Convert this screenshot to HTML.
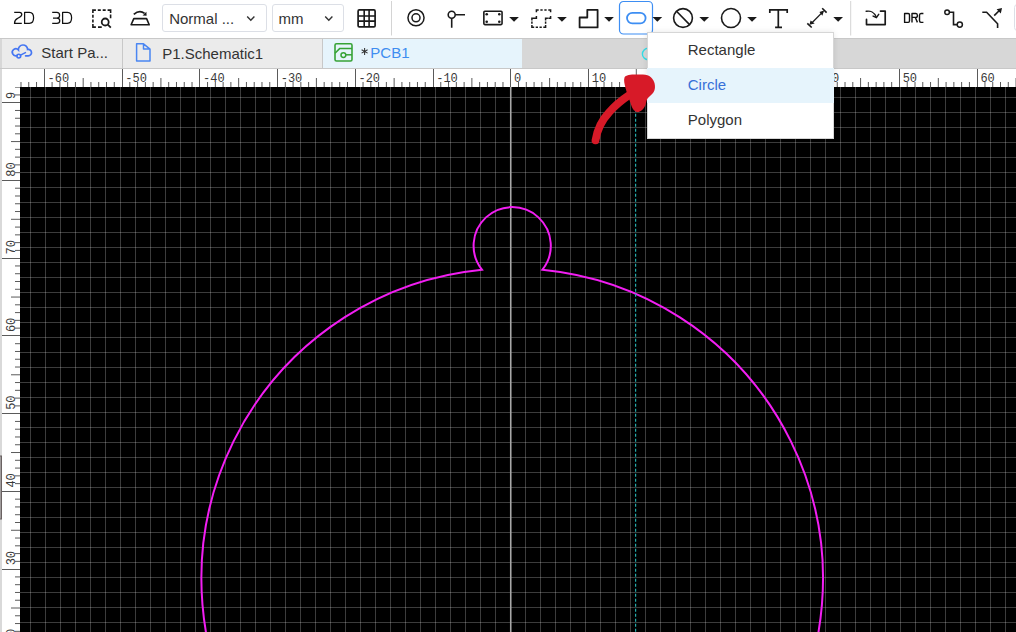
<!DOCTYPE html>
<html><head><meta charset="utf-8"><style>
html,body{margin:0;padding:0;}
body{width:1016px;height:632px;position:relative;overflow:hidden;background:#fff;font-family:"Liberation Sans",sans-serif;color:#222;}
.a{position:absolute;}
.sel{position:absolute;top:4px;height:27.5px;border:1px solid #dcdfe6;border-radius:3px;background:#fff;box-sizing:border-box;}
.sel span{position:absolute;left:6.2px;top:4.6px;font-size:15px;color:#333;}
.tabbar{position:absolute;left:0;top:38px;width:1016px;height:31px;background:#d7d7d7;border-top:1px solid #c8c8c8;border-bottom:1px solid #c8c8c8;box-sizing:border-box;}
.tab{position:absolute;top:39px;height:29px;background:#ebebeb;}
.tab span{position:absolute;top:6.7px;font-size:15px;color:#333;white-space:nowrap;}
.menu{position:absolute;left:647.2px;top:32.2px;width:186.6px;height:106.8px;background:#fff;border:1px solid #d6d6d6;box-sizing:border-box;box-shadow:0 0 6px rgba(0,0,0,0.10);}
.mi{position:absolute;left:-1px;width:186.6px;height:35px;font-size:15px;color:#333;}
.mi span{position:absolute;left:40.6px;top:9.8px;}
</style></head><body>
<svg width="1016" height="632" viewBox="0 0 1016 632" style="position:absolute;left:0;top:0">
<defs><clipPath id="cv"><rect x="20" y="87" width="996" height="545"/></clipPath><clipPath id="rh"><rect x="20" y="69" width="996" height="18"/></clipPath><clipPath id="rv"><rect x="2" y="87" width="18" height="545"/></clipPath></defs>
<rect x="2" y="69" width="1014" height="563" fill="#fff"/>
<rect x="0" y="38" width="2" height="594" fill="#d9d9d9"/>
<rect x="20" y="87" width="996" height="545" fill="#000"/>
<path d="M30.50 87V632 M45.50 87V632 M60.50 87V632 M75.50 87V632 M90.50 87V632 M105.50 87V632 M120.50 87V632 M135.50 87V632 M150.50 87V632 M165.50 87V632 M180.50 87V632 M195.50 87V632 M210.50 87V632 M225.50 87V632 M240.50 87V632 M255.50 87V632 M270.50 87V632 M285.50 87V632 M300.50 87V632 M315.50 87V632 M330.50 87V632 M345.50 87V632 M360.50 87V632 M375.50 87V632 M390.50 87V632 M405.50 87V632 M420.50 87V632 M435.50 87V632 M450.50 87V632 M465.50 87V632 M480.50 87V632 M495.50 87V632 M510.50 87V632 M525.50 87V632 M540.50 87V632 M555.50 87V632 M570.50 87V632 M585.50 87V632 M600.50 87V632 M615.50 87V632 M630.50 87V632 M645.50 87V632 M660.50 87V632 M675.50 87V632 M690.50 87V632 M705.50 87V632 M720.50 87V632 M735.50 87V632 M750.50 87V632 M765.50 87V632 M780.50 87V632 M795.50 87V632 M810.50 87V632 M825.50 87V632 M840.50 87V632 M855.50 87V632 M870.50 87V632 M885.50 87V632 M900.50 87V632 M915.50 87V632 M930.50 87V632 M945.50 87V632 M960.50 87V632 M975.50 87V632 M990.50 87V632 M1005.50 87V632 M20 97.50H1016 M20 112.50H1016 M20 127.50H1016 M20 142.50H1016 M20 157.50H1016 M20 172.50H1016 M20 187.50H1016 M20 202.50H1016 M20 217.50H1016 M20 232.50H1016 M20 247.50H1016 M20 262.50H1016 M20 277.50H1016 M20 292.50H1016 M20 307.50H1016 M20 322.50H1016 M20 337.50H1016 M20 352.50H1016 M20 367.50H1016 M20 382.50H1016 M20 397.50H1016 M20 412.50H1016 M20 427.50H1016 M20 442.50H1016 M20 457.50H1016 M20 472.50H1016 M20 487.50H1016 M20 502.50H1016 M20 517.50H1016 M20 532.50H1016 M20 547.50H1016 M20 562.50H1016 M20 577.50H1016 M20 592.50H1016 M20 607.50H1016 M20 622.50H1016" stroke="#fff" stroke-opacity="0.235" stroke-width="1" fill="none"/>
<path d="M510.75 87V632" stroke="#a8a8a8" stroke-width="1.6"/>
<g clip-path="url(#cv)"><path d="M481.95 269.68 A38.6 38.6 0 1 1 542.45 269.68 A310.8 310.8 0 1 1 481.95 269.68 Z" stroke="#f21ef2" stroke-width="2" fill="none"/></g>
<path d="M635.6 87V632" stroke="#26aaaa" stroke-width="1.2" stroke-dasharray="3 2" stroke-dashoffset="-1.8"/>
<g clip-path="url(#rh)"><path d="M5.44 78V87 M13.21 82V87 M20.99 82V87 M28.76 82V87 M36.54 82V87 M44.50 69V87 M52.08 82V87 M59.86 82V87 M67.63 82V87 M75.41 82V87 M83.18 78V87 M90.95 82V87 M98.73 82V87 M106.50 82V87 M114.28 82V87 M122.50 69V87 M129.82 82V87 M137.60 82V87 M145.37 82V87 M153.15 82V87 M160.92 78V87 M168.69 82V87 M176.47 82V87 M184.24 82V87 M192.02 82V87 M199.50 69V87 M207.56 82V87 M215.34 82V87 M223.11 82V87 M230.89 82V87 M238.66 78V87 M246.43 82V87 M254.21 82V87 M261.98 82V87 M269.76 82V87 M277.50 69V87 M285.30 82V87 M293.08 82V87 M300.85 82V87 M308.63 82V87 M316.40 78V87 M324.17 82V87 M331.95 82V87 M339.72 82V87 M347.50 82V87 M355.50 69V87 M363.04 82V87 M370.82 82V87 M378.59 82V87 M386.37 82V87 M394.14 78V87 M401.91 82V87 M409.69 82V87 M417.46 82V87 M425.24 82V87 M433.50 69V87 M440.78 82V87 M448.56 82V87 M456.33 82V87 M464.11 82V87 M471.88 78V87 M479.65 82V87 M487.43 82V87 M495.20 82V87 M502.98 82V87 M510.50 69V87 M518.52 82V87 M526.30 82V87 M534.07 82V87 M541.85 82V87 M549.62 78V87 M557.39 82V87 M565.17 82V87 M572.94 82V87 M580.72 82V87 M588.50 69V87 M596.26 82V87 M604.04 82V87 M611.81 82V87 M619.59 82V87 M627.36 78V87 M635.13 82V87 M642.91 82V87 M650.68 82V87 M658.46 82V87 M666.50 69V87 M674.00 82V87 M681.78 82V87 M689.55 82V87 M697.33 82V87 M705.10 78V87 M712.87 82V87 M720.65 82V87 M728.42 82V87 M736.20 82V87 M743.50 69V87 M751.74 82V87 M759.52 82V87 M767.29 82V87 M775.07 82V87 M782.84 78V87 M790.61 82V87 M798.39 82V87 M806.16 82V87 M813.94 82V87 M821.50 69V87 M829.48 82V87 M837.26 82V87 M845.03 82V87 M852.81 82V87 M860.58 78V87 M868.35 82V87 M876.13 82V87 M883.90 82V87 M891.68 82V87 M899.50 69V87 M907.22 82V87 M915.00 82V87 M922.77 82V87 M930.55 82V87 M938.32 78V87 M946.09 82V87 M953.87 82V87 M961.64 82V87 M969.42 82V87 M977.50 69V87 M984.96 82V87 M992.74 82V87 M1000.51 82V87 M1008.29 82V87 M1016.06 78V87" stroke="#5a5a5a" stroke-width="1"/><g font-family="Liberation Mono" font-size="12" fill="#3a3a3a"><text x="47.51" y="81.6">-60</text><text x="125.25" y="81.6">-50</text><text x="202.99" y="81.6">-40</text><text x="280.73" y="81.6">-30</text><text x="358.47" y="81.6">-20</text><text x="436.21" y="81.6">-10</text><text x="513.95" y="81.6">0</text><text x="591.69" y="81.6">10</text><text x="669.43" y="81.6">20</text><text x="747.17" y="81.6">30</text><text x="824.91" y="81.6">40</text><text x="902.65" y="81.6">50</text><text x="980.39" y="81.6">60</text></g></g>
<g clip-path="url(#rv)"><path d="M2 646.50H20 M15 639.11H20 M15 631.33H20 M15 623.56H20 M15 615.78H20 M11 608.01H20 M15 600.24H20 M15 592.46H20 M15 584.69H20 M15 576.91H20 M2 569.50H20 M15 561.37H20 M15 553.59H20 M15 545.82H20 M15 538.04H20 M11 530.27H20 M15 522.50H20 M15 514.72H20 M15 506.95H20 M15 499.17H20 M2 491.50H20 M15 483.63H20 M15 475.85H20 M15 468.08H20 M15 460.30H20 M11 452.53H20 M15 444.76H20 M15 436.98H20 M15 429.21H20 M15 421.43H20 M2 413.50H20 M15 405.89H20 M15 398.11H20 M15 390.34H20 M15 382.56H20 M11 374.79H20 M15 367.02H20 M15 359.24H20 M15 351.47H20 M15 343.69H20 M2 335.50H20 M15 328.15H20 M15 320.37H20 M15 312.60H20 M15 304.82H20 M11 297.05H20 M15 289.28H20 M15 281.50H20 M15 273.73H20 M15 265.95H20 M2 258.50H20 M15 250.41H20 M15 242.63H20 M15 234.86H20 M15 227.08H20 M11 219.31H20 M15 211.54H20 M15 203.76H20 M15 195.99H20 M15 188.21H20 M2 180.50H20 M15 172.67H20 M15 164.89H20 M15 157.12H20 M15 149.34H20 M11 141.57H20 M15 133.80H20 M15 126.02H20 M15 118.25H20 M15 110.47H20 M2 102.50H20 M15 94.93H20 M15 87.15H20" stroke="#5a5a5a" stroke-width="1"/><g font-family="Liberation Mono" font-size="12" fill="#3a3a3a"><text transform="translate(14.9 643.08) rotate(-90)">20</text><text transform="translate(14.9 565.34) rotate(-90)">30</text><text transform="translate(14.9 487.60) rotate(-90)">40</text><text transform="translate(14.9 409.86) rotate(-90)">50</text><text transform="translate(14.9 332.12) rotate(-90)">60</text><text transform="translate(14.9 254.38) rotate(-90)">70</text><text transform="translate(14.9 176.64) rotate(-90)">80</text><text transform="translate(14.9 98.90) rotate(-90)">9</text></g></g>
<rect x="0" y="456" width="1.5" height="63" fill="none" stroke="#6a6262" stroke-width="1"/>
<path d="M636.3 69V87" stroke="#666" stroke-width="1"/>
</svg>

<svg class="a" style="left:0;top:0" width="80" height="38"><g fill="none" stroke="#111" stroke-width="1.25" stroke-linejoin="round">
<path d="M14.2 12.3H19.6C21.2 12.3 21.8 13.4 21.8 14.6C21.8 16.5 19.5 17.5 17.6 18.4C15.6 19.4 14.5 20.6 14.5 23.4H21.8"/>
<path d="M24.6 12.3V23.4H29.4C32 23.4 33.6 21.2 33.6 17.85C33.6 14.5 32 12.3 29.4 12.3Z"/>
<path d="M52.2 12.3H56.8C58.4 12.3 59.6 13.4 59.6 15.2C59.6 16.9 58.6 18.1 56.8 18.1H53M56.8 18.1C58.6 18.1 59.75 19.2 59.75 20.8C59.75 22.4 58.6 23.4 56.8 23.4H52.2"/>
<path d="M62.6 12.3V23.4H67.4C70 23.4 71.6 21.2 71.6 17.85C71.6 14.5 70 12.3 67.4 12.3Z"/>
</g></svg>

<div class="sel" style="left:162px;width:105px"><span>Normal ...</span></div><svg class="a" style="left:245.5px;top:15px" width="10" height="8"><path d="M1.2 1.5L4.8 5.3L8.4 1.5" fill="none" stroke="#333" stroke-width="1.4"/></svg>
<div class="sel" style="left:272px;width:72px"><span style="left:5.5px">mm</span></div><svg class="a" style="left:323.6px;top:15px" width="10" height="8"><path d="M1.2 1.5L4.8 5.3L8.4 1.5" fill="none" stroke="#333" stroke-width="1.4"/></svg>
<svg width="1016" height="38" style="position:absolute;left:0;top:0">
<g fill="none" stroke="#1a1a1a" stroke-width="1.8">
<!-- zoom fit -->
<path d="M110.60 18.35L110.60 14.60 M110.60 13.10L110.60 9.35 M111.35 10.10L107.60 10.10 M105.70 10.10L102.70 10.10 M100.80 10.10L97.80 10.10 M95.90 10.10L92.15 10.10 M92.90 9.35L92.90 13.10 M92.90 14.77L92.90 17.77 M92.90 19.43L92.90 22.43 M92.90 24.10L92.90 27.85 M92.15 27.10L95.90 27.10 M98.00 27.10L101.75 27.10" stroke-width="1.6"/>
<circle cx="105.2" cy="22" r="3.5"/>
<path d="M107.8 24.6L110.8 27.6"/>
<!-- flip -->
<path d="M133.8 18.6H146.6L149.2 24.7H131.1Z" stroke-linejoin="round" stroke-width="1.6"/>
<path d="M133.8 14.4Q139.5 9.5 144.6 13.4"/>
</g>
<path d="M142.6 15.6L146.4 11.8L146.6 15.7Z" fill="#1a1a1a"/>
<!-- grid icon -->
<g fill="none" stroke="#1a1a1a" stroke-width="1.8">
<rect x="358.1" y="9.95" width="17" height="16.9" rx="1.2" stroke-width="1.7"/>
<path d="M364.2 9.95V26.85M369.1 9.95V26.85M358.1 16H375.1M358.1 21.1H375.1" stroke-width="1.6"/>
</g>
<path d="M391.5 1V35.5" stroke="#d4d4d4" stroke-width="1"/>
<g fill="none" stroke="#1a1a1a" stroke-width="1.8">
<!-- via -->
<circle cx="416" cy="17.8" r="8.05" stroke-width="1.5"/>
<circle cx="416" cy="17.8" r="4.0" stroke-width="1.5"/>
<!-- pin -->
<circle cx="451.7" cy="14.7" r="3.5" stroke-width="1.6"/>
<path d="M455.2 14.7H465M451.7 18.2V27.8" stroke-width="1.6"/>
<!-- rect board -->
<rect x="483.85" y="11.2" width="18.2" height="13.4" rx="1" stroke-width="1.6"/>
<!-- dashed S -->
<path d="M531.15 18.20L534.20 18.20 M534.10 18.20L537.15 18.20 M536.40 18.95L536.40 15.90 M536.40 12.20L536.40 9.15 M535.65 9.90L538.70 9.90 M540.37 9.90L542.67 9.90 M544.33 9.90L546.63 9.90 M548.30 9.90L551.35 9.90 M550.60 9.15L550.60 12.20 M550.60 15.90L550.60 18.95 M551.35 18.20L548.30 18.20 M547.90 18.20L544.85 18.20 M545.60 17.45L545.60 20.50 M545.60 21.55L545.60 23.85 M545.60 24.90L545.60 27.95 M546.35 27.20L543.30 27.20 M541.80 27.20L539.50 27.20 M538.00 27.20L535.70 27.20 M534.20 27.20L531.15 27.20 M531.90 27.95L531.90 24.90 M531.90 23.85L531.90 21.55 M531.90 20.50L531.90 17.45" stroke-width="1.5"/>
<!-- L shape -->
<path d="M579.6 17.5H587.3V9.8H597.6V27.4H579.6Z" stroke-linejoin="round"/>
</g>
<g fill="#1a1a1a"><circle cx="486.7" cy="14.2" r="1.3"/><circle cx="499.3" cy="14.2" r="1.3"/><circle cx="486.7" cy="21.7" r="1.3"/><circle cx="499.3" cy="21.7" r="1.3"/></g>
<path d="M509.2 17.1H518.9L514.05 21.8Z" fill="#1a1a1a"/><path d="M557.1 17.1H566.8000000000001L561.95 21.8Z" fill="#1a1a1a"/><path d="M604.1999999999999 17.1H613.9L609.05 21.8Z" fill="#1a1a1a"/>
<!-- active box -->
<rect x="619.5" y="1.5" width="33" height="32.5" rx="4" fill="none" stroke="#3d8ef3" stroke-width="1.2"/>
<rect x="627" y="12.8" width="18.6" height="10.6" rx="5.3" fill="none" stroke="#3d8ef3" stroke-width="1.8"/>
<path d="M652.5 17.1H662.2L657.35 21.8Z" fill="#1a1a1a"/>
<g fill="none" stroke="#1a1a1a" stroke-width="1.8">
<circle cx="683" cy="18" r="9.4" stroke-width="1.6"/>
<path d="M676.5 11.2L689.6 24.6" stroke-width="1.6"/>
<circle cx="731" cy="18" r="9.5" stroke-width="1.6"/>
</g>
<path d="M699.4 17.1H709.1L704.25 21.8Z" fill="#1a1a1a"/><path d="M747.1999999999999 17.1H756.9L752.05 21.8Z" fill="#1a1a1a"/>
<!-- T -->
<g fill="none" stroke="#1a1a1a" stroke-width="1.8">
<path d="M769.8 13V9.9H787.2V13M778.3 9.9V27.3M775.1 27.3H782" stroke-width="1.7"/>
<!-- arrow -->
<path d="M811 23.8L823.3 11.4" stroke-width="1.3"/>
<path d="M807.3 23.3L811.7 27.5M822.2 8.2L826.6 12.6" stroke-width="1.6"/>
</g>
<path d="M809.4 24.8L810.6 20.6L814.7 23.5Z M824 10.5L819.4 11.9L822.4 15.8Z" fill="#1a1a1a"/>
<path d="M833.3 17.1H843.0L838.15 21.8Z" fill="#1a1a1a"/>
<path d="M850.7 1V35.5" stroke="#d4d4d4" stroke-width="1"/>
<g fill="none" stroke="#1a1a1a" stroke-width="1.8">
<!-- import -->
<path d="M866.5 19.4V24.6H885.2V11.05H880.5" stroke-width="1.7" stroke-linejoin="round" stroke-linecap="round"/>
<path d="M866.2 11.3C870 10.5 874.5 12 876.3 17.2" stroke-width="1.4" stroke-linecap="round"/>
<path d="M873.1 16.1L876.4 17.6L878.7 14.4" stroke-width="1.5" stroke-linecap="round"/>
<!-- route -->
<circle cx="947.1" cy="12.2" r="2.3" stroke-width="1.5"/>
<path d="M949.4 12.2H953.5V24.6H957.3" stroke-width="1.6"/>
<circle cx="959.8" cy="24.6" r="2.6" stroke-width="1.5"/>
<!-- diag -->
<path d="M982.3 12.2H986.6L997.6 23.8V27.9" stroke-width="1.6"/>
<path d="M994.2 15.6L999.6 10.2" stroke-width="1.6"/>
</g>

<path d="M1002 8L996.6 9.3L1000.8 13.4Z" fill="#1a1a1a"/>
<rect x="1014.5" y="4.5" width="10" height="26" rx="3" fill="#fff" stroke="#dcdfe6" stroke-width="1"/>
</svg>
<svg class="a" style="left:0;top:0" width="1016" height="38"><g fill="none" stroke="#111" stroke-width="1.4" stroke-linejoin="round">
<path d="M904.6 13.5V22.4H908.2C909 22.4 909.5 21.8 909.5 20.8V15.1C909.5 14.1 909 13.5 908.2 13.5Z"/>
<path d="M912 22.4V13.5H915.9C916.9 13.5 917.4 14.3 917.4 15.4C917.4 16.6 916.9 17.4 915.9 17.4H912M915.3 17.5L917.4 22.4"/>
<path d="M923.4 13.5H921C920.1 13.5 919.5 14.2 919.5 15.3V20.6C919.5 21.7 920.1 22.4 921 22.4H923.4"/>
</g></svg>

<div class="tabbar"></div>
<div class="tab" style="left:2px;width:120px"><span style="left:39.3px;top:5.1px">Start Pa...</span></div>
<div class="a" style="left:122px;top:39px;width:1px;height:29px;background:#c8c8c8"></div>
<div class="tab" style="left:123px;width:199px"><span style="left:39.2px;top:5.9px">P1.Schematic1</span></div>
<div class="a" style="left:322px;top:39px;width:1px;height:29px;background:#c8c8c8"></div>
<div class="tab" style="left:323px;width:199px;background:#e6f4fc"><span style="left:47.3px;top:5.0px;font-size:15px;color:#3e8df0">PCB1</span></div>
<svg width="1016" height="70" style="position:absolute;left:0;top:0">
<!-- cloud -->
<path d="M25.6 55.8H28.3A3.2 3.2 0 1 0 27.6 49.48A4.6 4.6 0 1 0 18.41 49.87A3.5 3.5 0 1 0 17.0 55.5" fill="none" stroke="#4677f2" stroke-width="1.7" stroke-linecap="round"/>
<circle cx="18.8" cy="56.1" r="1.9" fill="none" stroke="#4677f2" stroke-width="1.6"/>
<path d="M20.5 55.1L25.4 52.6" stroke="#4677f2" stroke-width="1.6" stroke-linecap="round"/>
<!-- file -->
<path d="M136.6 43.8H143.5L150 49.2V61H136.6Z M143.5 43.8V48.9H150" fill="none" stroke="#4a86f2" stroke-width="1.5" stroke-linejoin="round"/>
<!-- pcb -->
<rect x="335" y="43.8" width="17" height="17.2" rx="1.5" fill="none" stroke="#37a337" stroke-width="1.6"/>
<path d="M335 53.2L339.6 48.6H352" fill="none" stroke="#37a337" stroke-width="1.5"/>
<circle cx="343.4" cy="55.1" r="2.4" fill="none" stroke="#37a337" stroke-width="1.5"/>
<path d="M345.8 54.8H352" stroke="#37a337" stroke-width="1.5"/>
<path d="M364.6 47.9V54.9M361.6 49.7L367.6 53.1M361.6 53.1L367.6 49.7" stroke="#333" stroke-width="1.05"/>
<!-- cyan cursor circle -->
<circle cx="648.2" cy="54" r="5.8" fill="none" stroke="#33dde6" stroke-width="1.4"/>
</svg>

<div class="menu">
<div class="mi" style="top:-1px"><span style="top:9.1px">Rectangle</span></div>
<div class="mi" style="top:34.4px;background:#e6f4fc;color:#3770d8"><span style="top:8.3px">Circle</span></div>
<div class="mi" style="top:69.5px;height:36.5px;"><span style="top:8.1px">Polygon</span></div>
</div>
<svg width="1016" height="632" style="position:absolute;left:0;top:0">
<path d="M595.5 140.3C597 131 601 121 609 112.5C614 106.5 621 100.5 630 94.5" stroke="#d71a28" stroke-width="7.8" stroke-linecap="round" fill="none"/>
<path d="M624.5 77.5C626 74.5 632 74.5 640 74.6C648 74.6 652 76 654.5 83C656 89 654 93 650 96C646 99 646.5 102 645.5 105C643.5 110 639.5 112.5 637 112C634 111.5 632 108 630.5 103C628.5 97 626.5 92 625.5 88C624.5 84 623.5 80 624.5 77.5Z" fill="#d71a28"/>
</svg></body></html>
